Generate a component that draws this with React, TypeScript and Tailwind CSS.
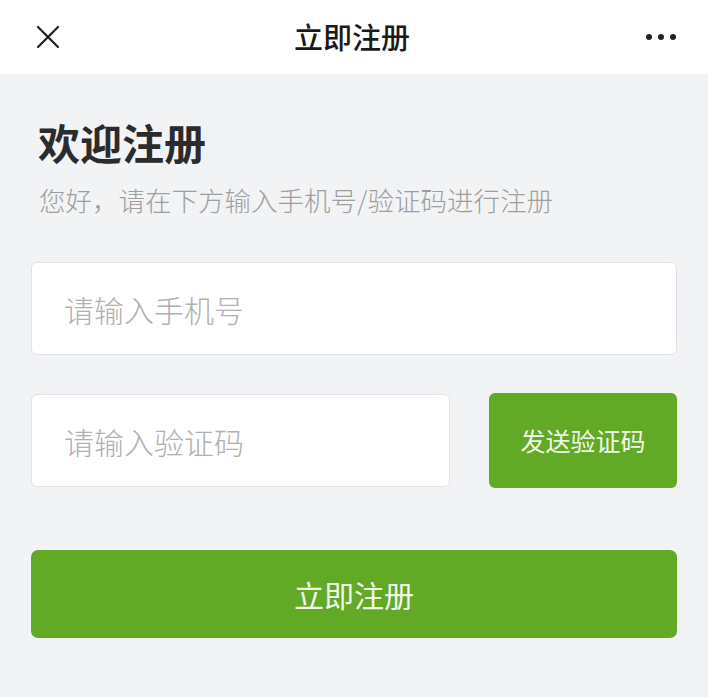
import { X } from 'lucide-react'

const font = '"Noto Sans CJK SC", "Noto Sans", sans-serif'

export default function App() {
  return (
    <div className="min-h-[697px] w-[708px] bg-[#f2f3f5]" style={{ fontFamily: font }}>
      <header className="flex h-[74px] items-center justify-between bg-white pl-[28px] pr-[32px]">
        <X size={40} strokeWidth={1.35} className="text-[#222]" />
        <h1 className="pr-[10px] text-[29px] font-medium text-[#1a1a1a]">立即注册</h1>
        <div className="flex gap-[6px]">
          <span className="h-[6px] w-[6px] rounded-full bg-[#222]" />
          <span className="h-[6px] w-[6px] rounded-full bg-[#222]" />
          <span className="h-[6px] w-[6px] rounded-full bg-[#222]" />
        </div>
      </header>

      <main className="px-[31px] pt-[40px]">
        <h2 className="pl-[7px] text-[42px] font-bold leading-[56px] text-[#2b2b2b]">欢迎注册</h2>
        <p className="mt-[13px] pl-[8px] text-[26.5px] font-light leading-[34px] text-[#9e9e9e]">
          您好，请在下方输入手机号/验证码进行注册
        </p>

        <input
          placeholder="请输入手机号"
          className="mt-[45px] block h-[93px] w-full rounded-[6px] border border-[#dfe2e6] bg-white px-[32px] text-[30px] font-light text-[#333] outline-none placeholder:text-[#b0b0b0]"
        />

        <div className="mt-[38px] flex items-center gap-[39px]">
          <input
            placeholder="请输入验证码"
            className="block h-[93px] w-[419px] rounded-[6px] border border-[#dfe2e6] bg-white px-[32px] text-[30px] font-light text-[#333] outline-none placeholder:text-[#b0b0b0]"
          />
          <button className="h-[95px] flex-1 rounded-[6px] bg-[#62a926] text-[25px] text-[#f3f8e8]">
            发送验证码
          </button>
        </div>

        <button className="mt-[62px] block h-[88px] w-full rounded-[7px] bg-[#62a926] text-[30px] text-[#f3f8e8]">
          立即注册
        </button>
      </main>
    </div>
  )
}
